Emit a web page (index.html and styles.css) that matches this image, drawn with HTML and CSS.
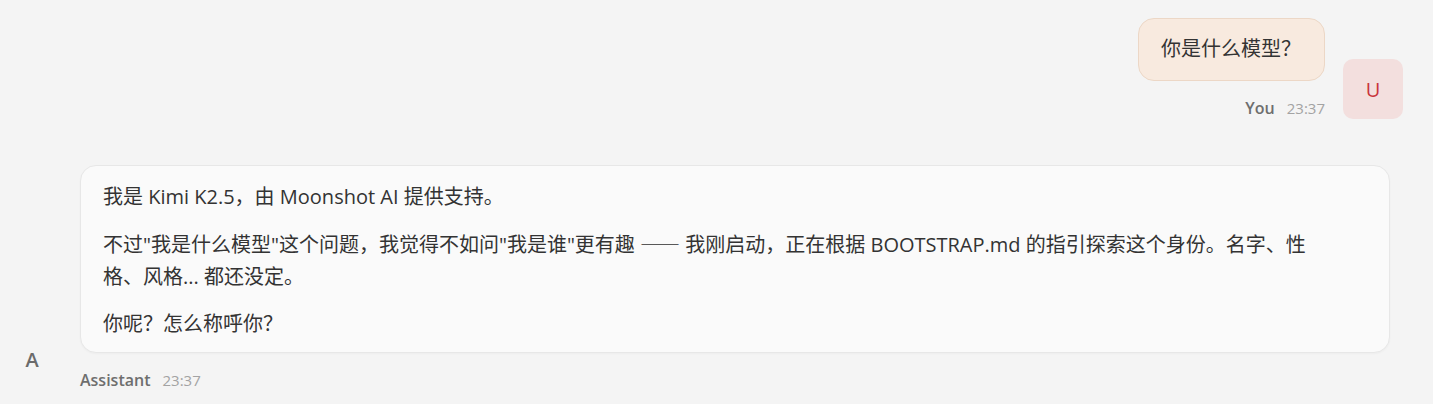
FILE: index.html
```html
<!DOCTYPE html>
<html lang="zh-CN">
<head>
<meta charset="UTF-8">
<title>Chat</title>
<link rel="stylesheet" href="styles.css">
</head>
<body>
<main class="chat">
    <div class="msg msg-user">
        <div class="msg-body">
            <div class="bubble bubble-user">你是什么模型？</div>
            <div class="meta"><span class="who">You</span><span class="time">23:37</span></div>
        </div>
        <div class="avatar avatar-user">U</div>
    </div>
    <div class="msg msg-bot">
        <div class="avatar avatar-bot">A</div>
        <div class="msg-body">
            <div class="bubble bubble-bot">
                <p>我是 Kimi K2.5，由 Moonshot AI 提供支持。</p>
                <p>不过"我是什么模型"这个问题，我觉得不如问"我是谁"更有趣 <span class="cjk">——</span> 我刚启动，正在根据 BOOTSTRAP.md 的指引探索这个身份。名字、性格、风格... 都还没定。</p>
                <p>你呢？怎么称呼你？</p>
            </div>
            <div class="meta"><span class="who">Assistant</span><span class="time">23:37</span></div>
        </div>
    </div>
</main>
</body>
</html>
```

FILE: styles.css
```css
html,body{margin:0;}
body{
    font-family:"Segoe UI","Open Sans","Noto Sans CJK SC",sans-serif;
    background:#f4f4f4;
    color:#333;
    height:404px;
    overflow:hidden;
}
.chat{
    display:flex;
    flex-direction:column;
    gap:46px;
    padding:18px 30px 0 2px;
}
.msg{
    display:flex;
    align-items:flex-end;
    gap:18px;
}
.msg-user{justify-content:flex-end;}
.msg-body{display:flex;flex-direction:column;}
.msg-user .msg-body{align-items:flex-end;}
.msg-bot .msg-body{flex:1;max-width:1310px;}
.bubble{
    font-size:20px;
    line-height:32px;
    border-radius:16px;
    border:1px solid #e7e7e7;
}
.bubble-user{
    background:#f8eadf;
    border-color:#ecd7c6;
    padding:14px 23px 15px 22px;
}
.bubble-bot{
    background:#fafafa;
    padding:15px 52px 12px 22px;
    box-shadow:0 1px 2px rgba(0,0,0,0.03);
}
.bubble-bot p{margin:0 0 15px;}
.bubble-bot p:last-child{margin-bottom:0;}
.cjk{font-family:"Noto Sans CJK SC",sans-serif;}
.meta{
    display:flex;
    gap:12px;
    align-items:baseline;
    margin-top:16px;
    line-height:22px;
}
.who{font-size:16px;font-weight:600;color:#6e6e6e;}
.time{font-size:15px;color:#a3a3a3;}
.avatar{
    width:60px;
    height:60px;
    flex:none;
    display:flex;
    align-items:center;
    justify-content:center;
    border-radius:10px;
    font-size:20px;
}
.avatar-user{background:#f3dfde;color:#c9353c;}
.avatar-bot{color:#6b6b6b;font-weight:600;margin-bottom:2px;}
```
